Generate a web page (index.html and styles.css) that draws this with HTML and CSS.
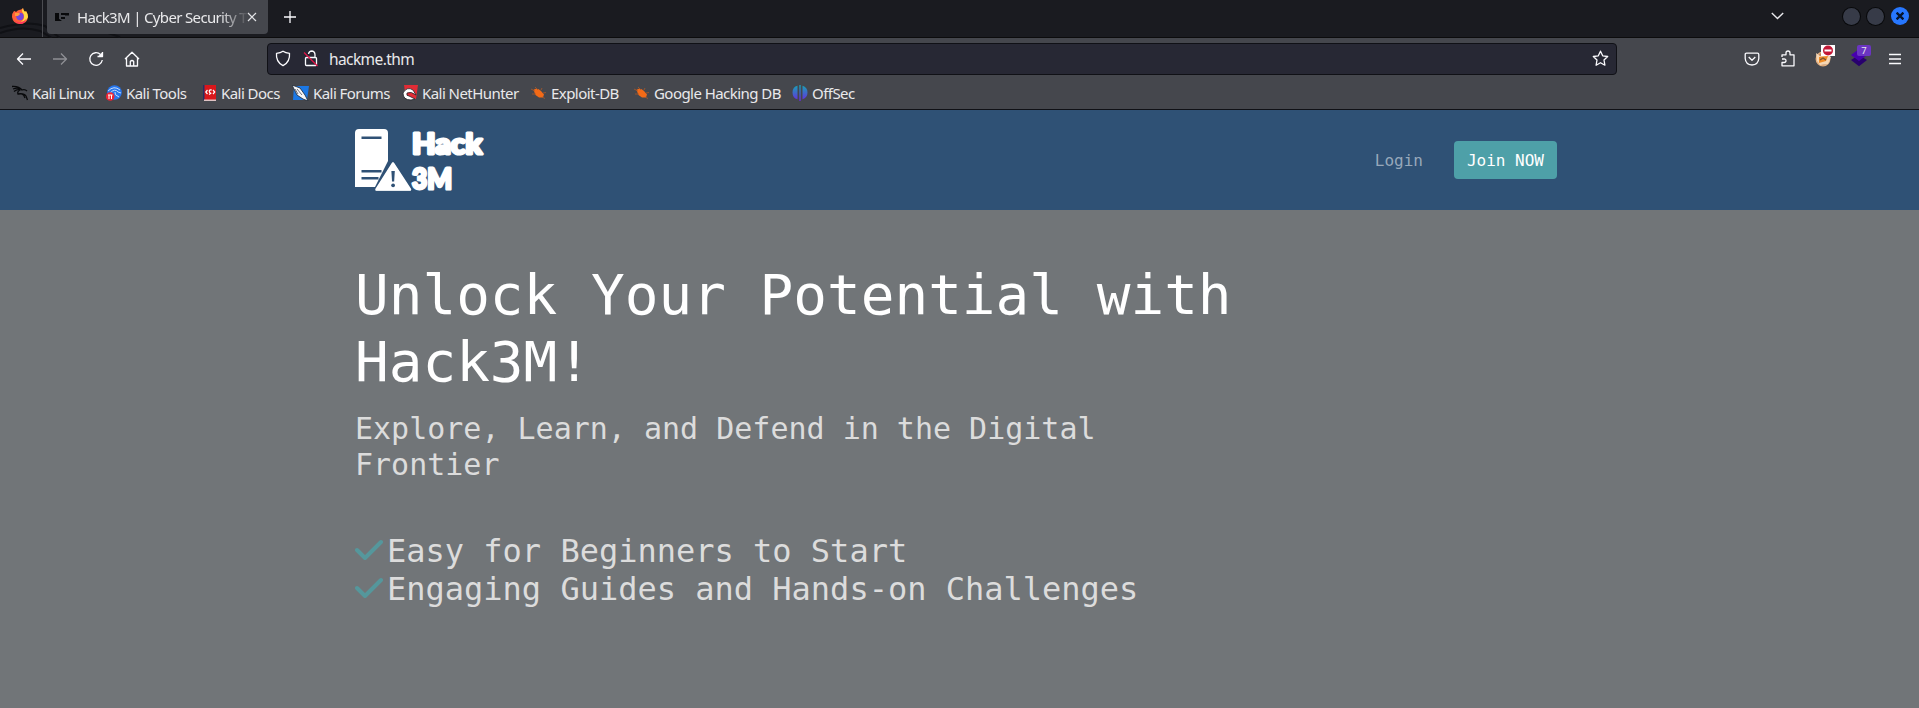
FILE: index.html
```html
<!DOCTYPE html>
<html lang="en">
<head>
<meta charset="utf-8">
<title>Hack3M | Cyber Security Training</title>
<link rel="stylesheet" href="styles.css">
</head>
<body>
<div class="tabbar">
  <svg class="swirl" width="140" height="38" viewBox="0 0 140 38" fill="none" stroke="#101115"><path d="M0 28Q28 20 45 26L60 38M0 33Q22 25 40 31L52 38M50 28Q90 25 120 37" stroke-width="2"/></svg>
  <div class="pinned">
    <svg width="16" height="16" viewBox="0 0 16 16"><path d="M2 3Q3 3 4 4Q6 2 7 2Q8 2 10 1L11 0Q11 2 13 4L14 3Q16 6 16 9Q15 16 8 16Q1 16 0 9Q0 5 2 3Z" fill="#ff6038"/><path d="M11 0Q11 2 13 4L14 3Q16 6 16 9Q14 14 9 14Q14 10 11 5Q9 3 11 0Z" fill="#ffd944"/><path d="M1 10Q3 14 8 14.500Q12 14 14 11Q13 16 8 16Q3 15 1 10Z" fill="#ff355d"/><circle cx="8" cy="8.500" r="3.700" fill="#7446dc"/><path d="M3 5L7 5Q9 6 7 7L6 8L3 8Z" fill="#ff9b3d"/></svg>
  </div>
  <div class="tab">
    <svg class="fav" width="16" height="16" viewBox="0 0 16 16" fill="#08090b"><path d="M1 4h4v8H1zM4 9l4 3H4zM7 4h8v2H7zM7 8h4v2H7z"/><path d="M11 4h4v3h-4z" opacity=".5"/></svg>
    <span class="tab-title">Hack3M | Cyber Security T</span>
    <svg width="10" height="10" viewBox="0 0 10 10" stroke="#e4e5e8" stroke-width="1.200" fill="none"><path d="M1 1l8 8M9 1l-8 8"/></svg>
  </div>
  <svg class="plus" width="12" height="12" viewBox="0 0 12 12" stroke="#fbfbfe" stroke-width="1.300"><path d="M6 0v12M0 6h12"/></svg>
  <div class="wm">
    <svg width="13" height="8" viewBox="0 0 13 8" fill="none" stroke="#e8e8ec" stroke-width="1.400"><path d="M.8 1l5.700 5.500L12.200 1"/></svg>
    <span class="dot first"></span><span class="dot"></span>
    <span class="dot close"><svg width="8" height="8" viewBox="0 0 8 8" stroke="#07152d" stroke-width="2.300"><path d="M.6.6l6.800 6.800M7.400.6L.6 7.400"/></svg></span>
  </div>
</div>
<div class="toolbar">
  <div class="navbtns">
    <svg width="16" height="16" viewBox="0 0 16 16"><path d="M15 8H1.500M7 2.500L1.500 8L7 13.500"/></svg>
    <svg class="dim" width="16" height="16" viewBox="0 0 16 16"><path d="M1 8h13.500M9 2.500L14.500 8L9 13.500"/></svg>
    <svg width="16" height="16" viewBox="0 0 16 16"><path d="M12.500 3.500A6.300 6.300 0 1 0 14.300 9M9.500 5.500H14.500V1"/><path d="M10 5.500h4.500V1z" fill="#fbfbfe" stroke="none"/></svg>
    <svg width="16" height="16" viewBox="0 0 16 16"><path d="M1 8L8 1.200L15 8M2.500 7v8h11V7M6.300 15v-4.500q1.700-2 3.400 0V15"/></svg>
  </div>
  <div class="url">
    <svg width="16" height="17" viewBox="0 0 16 17"><path d="M8 1.200Q10.500 3 14.500 3.300Q15.300 12 8 15.700Q.7 12 1.500 3.300Q5.500 3 8 1.200Z"/></svg>
    <svg class="lock" width="16" height="17" viewBox="0 0 16 17"><path d="M3.500 7.500h9q1 0 1 1v6q0 1-1 1h-9q-1 0-1-1v-6q0-1 1-1M5.500 4Q6 1 9 1Q12 1.500 12 5v2.500"/><path class="slash" d="M1 2.500L14.500 16"/></svg>
    <span class="url-text">hackme.thm</span>
    <svg class="star" width="17" height="17" viewBox="0 0 17 17"><path d="M8.500 1.200l2.200 4.600 5 .7-3.700 3.500.9 5.200-4.400-2.500-4.400 2.500.9-5.200L1.300 6.500l5-.7z"/></svg>
  </div>
  <div class="exts">
    <svg width="16" height="16" viewBox="0 0 16 16"><path d="M2.500 2.200h11q1.300 0 1.300 1.300v4Q14.300 13.700 8 14Q1.700 13.700 1.200 7.500v-4q0-1.300 1.300-1.300M4.700 6L8 9.200L11.300 6"/></svg>
    <svg class="puzzle" width="16" height="17" viewBox="0 0 16 17"><path d="M2 7V4.800h4V3q0-2 2-2t2 2v1.800h4v11H2v-3.300h2q2 0 2-1.800T4 9H2"/></svg>
    <svg class="fox" width="22" height="22" viewBox="0 0 22 22"><circle cx="9" cy="14" r="6.800" fill="#bd8560" stroke="#e3b080"/><path d="M2 8l4 3 8-1 3 2-3 7-8 1-3-4z" fill="#f5d7b5" stroke="none"/><path d="M5 12l9-1-2 5-7 2z" fill="#f08b24" stroke="none"/><path d="M6 15l3-2 3 2" stroke="#765136"/><path d="M7 0h14v11H7z" fill="#fff" stroke="none"/><circle cx="14" cy="5.500" r="5" fill="#c31836" stroke="none"/><path d="M10.500 5.500h7" stroke="#fff" stroke-width="2"/></svg>
    <span class="layers"><svg width="20" height="22" viewBox="0 0 20 22"><path d="M1 15l8-5 8 5-8 6.300z" fill="#28006d"/><path d="M1 10l8-6 8 6-8 6z" fill="#4700ae"/></svg><b>7</b></span>
    <svg class="burger" width="12" height="12" viewBox="0 0 12 12"><path d="M0 1.500h12M0 6h12M0 10.500h12"/></svg>
  </div>
</div>
<div class="bookmarks">
  <span><svg width="16" height="16" viewBox="0 0 16 16" fill="none" stroke="#08090b"><path d="M0 1.500Q7 1 10 5Q13 4 15 6M1 4Q6 2 8.500 4.500M8.500 5Q5 6 6 9Q12 8 14 11L15.500 15M2 6.500Q5 4 8 5M10 9Q12 10 13 13" stroke-width="1.300"/></svg>Kali Linux</span>
  <span><svg width="16" height="16" viewBox="0 0 16 16" fill="none"><circle cx="8.500" cy="7.500" r="7.300" fill="#2776ed"/><path d="M2 6Q8 0 14 5M4 8Q9 3 12 7L15 8M9 7q-1 3 4 5" stroke="#c5ddfa" stroke-width="1"/><circle cx="4.200" cy="11.500" r="4.300" fill="#ec2434"/><path d="M2 10h4.500M3 10v4M5.500 10v4" stroke="#fff"/></svg>Kali Tools</span>
  <span class="docs"><svg width="14" height="16" viewBox="0 0 14 16"><path d="M0 0h13v15H0z" fill="#d9171b"/><path d="M0 0h1.500v15H0z" fill="#262e66"/><path d="M1 14.500h12V16H1z" fill="#dfc3c4"/><path d="M4.500 5L2.800 7l1.700 2M10 5l1.700 2-1.700 2M8.800 5Q6 4.500 6.300 6.500T8.300 8L6 9.500" fill="none" stroke="#fff" stroke-width="1.200"/></svg>Kali Docs</span>
  <span><svg width="17" height="16" viewBox="0 0 17 16"><path d="M2 1h15l-2 14H1z" fill="#1b78e6"/><path d="M0 0l8 3 5 7 3 6-5-2-6-4z" fill="#f6f7f9" stroke="#1c2431" stroke-width=".8"/><path d="M5 4l5 6M3 4l3 5" stroke="#334" stroke-width=".7"/></svg>Kali Forums</span>
  <span><svg width="16" height="16" viewBox="0 0 16 16"><path d="M2 0h14l-2 14H4z" fill="#e12c35"/><path d="M1 8Q5 1 11 5L14 10Q9 6 5 8Q4 11 7 11L13 14 9 15Q1 15 1 8z" fill="#fff" stroke="#20242b" stroke-width=".8"/></svg>Kali NetHunter</span>
  <span><svg width="16" height="16" viewBox="0 0 16 16"><path d="M2.500 5Q6 2 10 6L13 9.500 12 12.500 8 12.500 4.500 10z" fill="#f36a17"/><path d="M0 4l4 2M1 9l4 0M4 2l3 3M10 5l1-2M12 8l3-.5M11 12l3 1.500" stroke="#aa592b" stroke-width=".8"/></svg>Exploit-DB</span>
  <span><svg width="16" height="16" viewBox="0 0 16 16"><path d="M2.500 5Q6 2 10 6L13 9.500 12 12.500 8 12.500 4.500 10z" fill="#f36a17"/><path d="M0 4l4 2M1 9l4 0M4 2l3 3M10 5l1-2M12 8l3-.5M11 12l3 1.500" stroke="#aa592b" stroke-width=".8"/></svg>Google Hacking DB</span>
  <span><svg width="16" height="16" viewBox="0 0 16 16"><defs><linearGradient id="os" gradientUnits="userSpaceOnUse" x1="0" y1="0" x2="0" y2="16"><stop stop-color="#16a5b5"/><stop offset="1" stop-color="#6a28df"/></linearGradient></defs><path d="M5.500.8v13.500Q.5 13 .5 7.500T5.500.8zM7.300 0h1.400v16H7.300zM10.500.8v13.500q5-1.500 5-6.800T10.500.8z" fill="url(#os)"/></svg>OffSec</span>
</div>
<header class="site-nav">
  <div class="container nav-row">
    <svg class="logo" width="132" height="64" viewBox="0 0 132 64" fill="#fff">
      <path fill-rule="evenodd" d="M4 0h25q4 0 4 4v28L20 58H0V4q0-4 4-4zM6.500 7.500v2.500h20V7.500zM6.500 41v2.500h20V41zM6.500 48v2.500h17V48z"/>
      <path d="M38 33L56 61.500H20.500z" fill="#fff" stroke="#2f5175" stroke-width="3" stroke-linejoin="round" paint-order="stroke"/>
      <path d="M38 34.500L55 60.500H21.500z" stroke="#fff" stroke-width="2.500" stroke-linejoin="round"/>
      <path d="M36.400 42h3.400l-.6 10.500h-2.200z" fill="#2f5175"/><circle cx="38.100" cy="56.300" r="1.900" fill="#2f5175"/>
      <g class="logo-text"><text x="57" y="24.500" textLength="70" lengthAdjust="spacingAndGlyphs">Hack</text><text x="57" y="59.500" textLength="40" lengthAdjust="spacingAndGlyphs">3M</text></g>
    </svg>
    <nav><a class="login">Login</a><a class="join">Join NOW</a></nav>
  </div>
</header>
<main class="hero">
  <div class="container">
    <h1>Unlock Your Potential with<br>Hack3M!</h1>
    <p class="lead">Explore, Learn, and Defend in the Digital<br>Frontier</p>
    <ul>
      <li><svg width="28" height="24" viewBox="0 0 28 24"><path d="M2 11l8 8L26 3"/></svg>Easy for Beginners to Start</li>
      <li><svg width="28" height="24" viewBox="0 0 28 24"><path d="M2 11l8 8L26 3"/></svg>Engaging Guides and Hands-on Challenges</li>
    </ul>
  </div>
</main>
</body>
</html>
```
FILE: styles.css
```css
* { box-sizing: border-box; }
body { margin: 0; width: 1919px; height: 708px; overflow: hidden; background: #717578; font-family: "Noto Sans", sans-serif; font-size: 15px; color: #e9e9eb; display: flex; flex-direction: column; }
svg { display: block; flex: none; }
.tabbar { position: relative; height: 38px; flex: none; background: #1a1b20; border-bottom: 1px solid #0c0c0d; display: flex; align-items: flex-start; }
.swirl { position: absolute; left: 0; top: 0; }
.pinned { width: 43px; height: 37px; padding: 8px 0 0 12px; border-right: 1px solid #4b4c51; position: relative; }
.tab { position: relative; margin-left: 4px; width: 221px; height: 34px; padding: 0 11px 1px 7px; background: #45474d; border-radius: 0 0 4px 4px; display: flex; align-items: center; }
.tab-title { margin-left: 7px; width: 170px; flex: none; white-space: nowrap; letter-spacing: -.66px; -webkit-mask-image: linear-gradient(90deg, #000 142px, transparent 172px); mask-image: linear-gradient(90deg, #000 142px, transparent 172px); }
.plus { margin: 11px 0 0 16px; }
.wm { margin: 7px 10px 0 auto; display: flex; align-items: center; }
.dot { width: 17px; height: 17px; margin-left: 7px; border-radius: 50%; background: #373b48; box-shadow: 0 0 0 1px #08090b; }
.dot.first { margin-left: 59px; }
.dot.close { width: 18px; height: 18px; background: #2777ff; box-shadow: none; display: grid; place-items: center; }
.toolbar { height: 40px; flex: none; background: #45474d; display: flex; align-items: center; padding-top: 1px; }
.toolbar svg { fill: none; stroke: #fbfbfe; stroke-width: 1.3; stroke-linejoin: round; }
.toolbar .slash { stroke: #e31447; }
.navbtns { display: flex; gap: 20px; padding: 0 0 0 16px; width: 267px; }
.navbtns .dim { opacity: .4; }
.url { width: 1350px; height: 32px; background: #272834; border: 1px solid #101116; border-radius: 4px; display: flex; align-items: center; padding: 0 7px; }
.lock { margin-left: 12px; }
.url-text { margin-left: 10px; font-size: 15.5px; letter-spacing: -.6px; }
.star { margin-left: auto; }
.exts { margin-left: 127px; display: flex; align-items: center; }
.puzzle { margin-left: 20px; }
.fox { margin: -5px 0 0 18px; }
.layers { position: relative; margin: -5px 0 0 14px; width: 22px; }
.toolbar .layers svg { stroke: none; }
.layers b { position: absolute; left: 7px; top: 0; width: 14px; height: 11px; border-radius: 2px; background: #6b35c2; font: 9.5px/11px "Noto Sans", sans-serif; text-align: center; }
.burger { margin-left: 17px; }
.bookmarks { height: 32px; flex: none; background: #45474d; border-bottom: 1px solid #101116; padding: 0 0 1px 12px; display: grid; grid-template-columns: 94px 97px 89px 110px 129px 103px 158px 90px; align-items: center; letter-spacing: -.55px; }
.bookmarks span { display: flex; align-items: center; gap: 4px; white-space: nowrap; }
.site-nav { height: 100px; flex: none; background: #2f5175; font: 16px "DejaVu Sans Mono", monospace; }
.container { width: 1202px; margin-left: 355px; }
.nav-row { height: 100px; display: flex; align-items: center; justify-content: space-between; }
.logo { margin-top: 1px; overflow: visible; }
.logo-text { font: 900 28px Lato, sans-serif; stroke: #fff; stroke-width: 3px; stroke-linejoin: round; }
nav { display: flex; align-items: center; gap: 31px; }
.login { color: #97a8ba; padding-top: 1px; }
.join { height: 38px; line-height: 40px; padding: 0 13px; border-radius: 4px; background: #4ea0a8; color: #fff; }
.hero { flex: 1; background: #717578; padding-top: 51px; font-family: "DejaVu Sans Mono", monospace; color: #dcdcdc; }
h1 { margin: 0; font-size: 56px; line-height: 67.2px; font-weight: 400; color: #fff; }
.lead { margin: 16px 0 0; font-size: 30px; line-height: 36px; }
ul { list-style: none; margin: 49px 0 0; padding: 0; font-size: 32px; line-height: 38px; }
li { display: flex; align-items: center; gap: 4px; }
li svg { fill: none; stroke: #55979c; stroke-width: 4; stroke-linecap: round; stroke-linejoin: round; }
```
